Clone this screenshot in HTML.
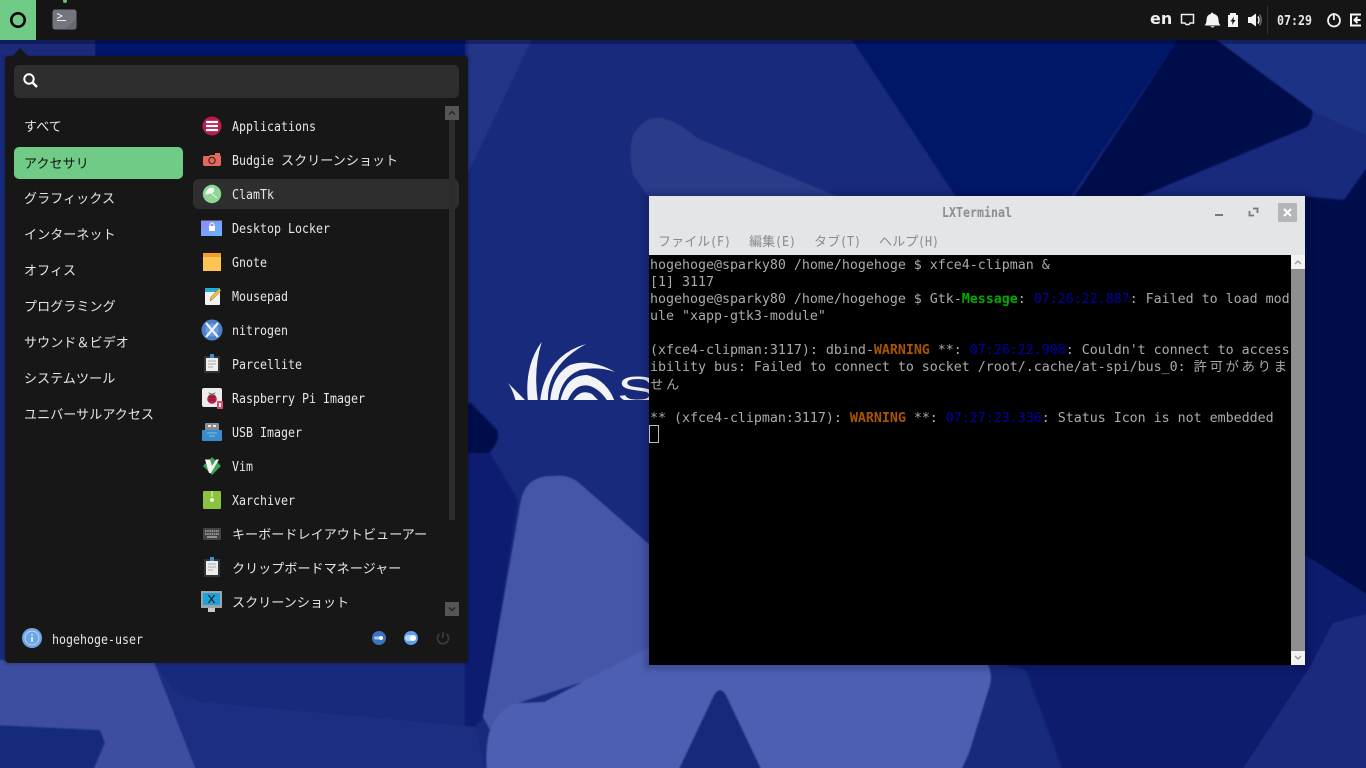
<!DOCTYPE html>
<html><head><meta charset="utf-8"><style>
html,body{margin:0;padding:0;width:1366px;height:768px;overflow:hidden;background:#182a7c}
*{box-sizing:border-box}
.abs{position:absolute}
.l{position:absolute;white-space:pre;line-height:20px;height:20px;font-family:"DejaVu Sans Mono","Liberation Mono",monospace;font-size:13px;color:#e6e6e6;transform:scaleX(.894);transform-origin:0 50%}
.j{position:absolute;white-space:pre;line-height:20px;height:20px;font-family:"Liberation Sans","Noto Sans CJK JP",sans-serif;font-size:13px;letter-spacing:.1px;color:#e6e6e6}
.tl{position:absolute;left:650px;white-space:pre;height:17px;line-height:17px;font-family:"DejaVu Sans Mono",monospace;font-size:13.33px;letter-spacing:-.03px;color:#aaa}
.tl b.g{color:#00aa00}.tl b.o{color:#aa5500}.tl i{font-style:normal;color:#0000aa}
.tl .cj{font-family:"Noto Sans CJK JP",sans-serif;letter-spacing:2.67px}
</style></head><body>
<svg class="abs" style="left:0;top:0" width="1366" height="768" viewBox="0 0 1366 768">
<defs><filter id="b" x="-5%" y="-5%" width="110%" height="110%"><feGaussianBlur stdDeviation="0.9"/></filter>
<filter id="b2" x="-5%" y="-5%" width="110%" height="110%"><feGaussianBlur stdDeviation="3"/></filter>
<linearGradient id="lk" x1="0" y1="0" x2="1" y2="1"><stop offset="0" stop-color="#8f86ff"/><stop offset="1" stop-color="#66b8ff"/></linearGradient>
<clipPath id="lc"><rect x="480" y="320" width="170" height="80"/></clipPath></defs>
<rect width="1366" height="768" fill="#182a7c"/>
<g filter="url(#b)">
<polygon points="-5,35 36,35 95,35 95,60 36,60 -5,60" fill="#1b2c7a"/>
<polygon points="95,35 465,35 465,60 95,60" fill="#06186a"/>
<polygon points="468,35 534,35 468,173" fill="#243587"/>
<polygon points="849,35 1181,35 1069,200 958,200" fill="#021266"/>
<path d="M1181,35 H1210 L1310,103 Q1316,115 1307,127 L1132,200 H1072Z" fill="#000a4c"/>
<polygon points="1210,35 1371,35 1371,137 1316,113" fill="#1f3084"/>
<polygon points="1344,200 1371,162 1371,600 1300,557 1300,196" fill="#000a4c"/>
<path d="M633,175 Q628,150 633,135 Q645,115 663,118 Q680,123 697,138 L846,200 H651Z" fill="#2a3a8a"/>
<path d="M465,403 H471 L497,430 Q501,440 489,453 H465Z" fill="#000a4c"/>
<polygon points="465,453 490,453 518,500 485,717 465,735" fill="#0c1e70"/>
<polygon points="153,660 173,690 200,702 475,727 486,773 197,773" fill="#1e2f82"/>
<polygon points="-5,660 153,660 197,773 92,773 105,743 100,730 -5,725" fill="#3c4ea0"/>
<path d="M-5,725 L95,730 Q107,735 103,747 L92,773 H-5Z" fill="#172a7c"/>
<path d="M521,500 Q526,476 552,476 Q568,474 578,482 L650,545 V660 L518,703 L490,730 L483,717Z" fill="#4457a8"/>
<path d="M648,648 L800,640 L975,650 Q995,665 990,685 L969,753 L960,773 H487 Q485,750 489,733 Q498,708 518,703 L544,702Z" fill="#4e5fb2"/>
<path d="M677,773 L713,697 Q720,683 727,697 L763,773Z" fill="#182a7c"/>
<polygon points="985,660 1305,555 1371,597 1371,613 1333,623 1310,667 1240,773 1064,773 1026,670" fill="#081b6c"/>
<polygon points="1333,623 1371,613 1371,773 1240,773 1310,667" fill="#1a2b7e"/>
</g>
<g clip-path="url(#lc)" fill="#f2f3f7">
<path d="M541.700,342 Q524,366 528,402 L538,402 Q533,370 541.700,342Z"/>
<path d="M508,383 L527,402 L516,402 Q513,390 508,383Z"/>
<path d="M586,344 Q545,356 540,402 L548,402 Q546,366 586,344Z"/>
<path d="M615,372 Q590,358 570,365 Q552,375 550,402 L558,402 Q560,378 580,370 Q598,366 615,372Z"/>
<path d="M615,402 Q607,380 587,375 Q566,375 560,402 L567,402 Q575,382 590,386 Q601,390 608,402Z"/>
<path d="M572,402 Q580,388 592,394 L600,402Z"/>
<text transform="translate(617,402) scale(1.7,1)" font-family="Liberation Sans" font-size="36" fill="#f2f3f7">S</text>
</g>
<rect x="644" y="192" width="666" height="478" fill="#000020" opacity=".18" filter="url(#b2)"/>
<rect x="0" y="40" width="1366" height="4" fill="#000030" opacity=".35"/>
<rect x="3" y="55" width="467" height="610" fill="#000" opacity=".12" filter="url(#b)"/>
</svg>

<!-- top panel -->
<div class="abs" style="left:0;top:0;width:1366px;height:40px;background:#151515"></div>
<div class="abs" style="left:0;top:0;width:36px;height:40px;background:#6fcb85"></div>
<svg class="abs" style="left:0;top:0" width="90" height="40">
<circle cx="18" cy="20" r="6.700" fill="none" stroke="#050505" stroke-width="2.600"/>
<circle cx="65" cy="1" r="2" fill="#5ec46e"/>
<rect x="52.500" y="9.500" width="24" height="20" rx="2.500" fill="#73767d"/>
<path d="M66,29 L76,19 V27 Q76,29 74,29Z" fill="#666970"/>
<path d="M57,13.500 L62,16 L57,18.500 M57,20.500 H66" fill="none" stroke="#eee" stroke-width="1"/>
</svg>
<div class="abs" style="left:1150px;top:9px;line-height:22px;font:bold 16px 'DejaVu Sans',sans-serif;color:#eee">en</div>
<svg class="abs" style="left:1175px;top:0" width="191" height="40">
<path d="M6.500,14.500 H18.500 V23 H15 L14,24.500 H11 L10,23 H6.500Z" fill="none" stroke="#eee" stroke-width="1.500"/>
<path d="M37,12.500 Q38,12.500 38.500,13.800 Q43.500,15 43.500,20 Q43.500,23.500 45.500,25.500 H29.500 Q31.500,23.500 31.500,20 Q31.500,15 36,13.800 Q36,12.500 37,12.500Z M35,26.200 H40 L37.500,27.800Z" fill="#f4f4f4"/>
<path d="M55,13 H61 V15 H63 V27 H53 V15 H55Z" fill="#f4f4f4"/>
<path d="M59,16.500 L55.500,21.500 H57.500 L57,25 L60.500,20 H58.500Z" fill="#151515"/>
<path d="M73,17 H76 L81,13.500 V26.500 L76,23 H73Z" fill="#f4f4f4"/>
<path d="M83,16.500 Q85,20 83,23.500" fill="none" stroke="#eee" stroke-width="1.500"/>
<path d="M84.500,14.500 Q88,20 84.500,25.500" fill="none" stroke="#666" stroke-width="1.500"/>
<rect x="92" y="6" width="1" height="28" fill="#333"/>
<path d="M155,14 Q150,16 150,20.500 A6,6 0 0 0 162,20.500 Q162,16 157,14" transform="translate(3,0)" fill="none" stroke="#f0f0f0" stroke-width="1.800"/>
<rect x="158" y="13" width="1.800" height="7" fill="#f0f0f0"/>
<path d="M186,14.500 H176 V25.500 H186" fill="none" stroke="#f4f4f4" stroke-width="2"/>
<path d="M185.500,20 H180 M182.500,17 L179.500,20 L182.500,23" fill="none" stroke="#f4f4f4" stroke-width="2"/>
</svg>
<div class="l" style="left:1277px;top:12px;font-weight:bold;color:#e8e8e8">07:29</div>

<!-- menu -->
<svg class="abs" style="left:5px;top:48px" width="30" height="10"><polygon points="7,9 15,0 24,9" fill="#171717"/></svg>
<div class="abs" style="left:5px;top:56px;width:463px;height:607px;background:#171717;border-radius:4px"></div>
<div class="abs" style="left:14px;top:65px;width:445px;height:33px;background:#2e2e2e;border-radius:5px"></div>
<svg class="abs" style="left:22px;top:72px" width="18" height="18"><circle cx="7" cy="7" r="4.700" fill="none" stroke="#fff" stroke-width="2"/><path d="M10.500,10.500 L15,15" stroke="#fff" stroke-width="2.400"/></svg>
<div class="abs" style="left:14px;top:147px;width:169px;height:32px;background:#6fcb85;border-radius:5px"></div>
<div class="abs" style="left:193px;top:179px;width:266px;height:30px;background:#2e2e2e;border-radius:6px"></div>

<div class="j" style="left:24px;top:117px">すべて</div>
<div class="j" style="left:24px;top:154px;color:#111">アクセサリ</div>
<div class="j" style="left:24px;top:189px">グラフィックス</div>
<div class="j" style="left:24px;top:225px">インターネット</div>
<div class="j" style="left:24px;top:261px">オフィス</div>
<div class="j" style="left:24px;top:297px">プログラミング</div>
<div class="j" style="left:24px;top:333px">サウンド＆ビデオ</div>
<div class="j" style="left:24px;top:369px">システムツール</div>
<div class="j" style="left:24px;top:405px">ユニバーサルアクセス</div>

<div class="l" style="left:232px;top:118px">Applications</div>
<div class="l" style="left:232px;top:152px">Budgie</div><div class="j" style="left:281px;top:151px">スクリーンショット</div>
<div class="l" style="left:232px;top:186px">ClamTk</div>
<div class="l" style="left:232px;top:220px">Desktop Locker</div>
<div class="l" style="left:232px;top:254px">Gnote</div>
<div class="l" style="left:232px;top:288px">Mousepad</div>
<div class="l" style="left:232px;top:322px">nitrogen</div>
<div class="l" style="left:232px;top:356px">Parcellite</div>
<div class="l" style="left:232px;top:390px">Raspberry Pi Imager</div>
<div class="l" style="left:232px;top:424px">USB Imager</div>
<div class="l" style="left:232px;top:458px">Vim</div>
<div class="l" style="left:232px;top:492px">Xarchiver</div>
<div class="j" style="left:232px;top:525px">キーボードレイアウトビューアー</div>
<div class="j" style="left:232px;top:559px">クリップボードマネージャー</div>
<div class="j" style="left:232px;top:593px">スクリーンショット</div>
<div class="l" style="left:52px;top:631px">hogehoge-user</div>

<svg class="abs" style="left:0;top:100px" width="470" height="563" viewBox="0 100 470 563">
<!-- scrollbar -->
<rect x="449" y="120" width="6" height="400" fill="#2c2c2c"/>
<rect x="445" y="106" width="14" height="14" fill="#555"/><path d="M449,114.500 L452,111.500 L455,114.500" fill="none" stroke="#2a2a2a" stroke-width="1.500"/>
<rect x="445" y="602" width="14" height="14" fill="#555"/><path d="M449,607.500 L452,610.500 L455,607.500" fill="none" stroke="#222" stroke-width="1.500"/>
<!-- applications -->
<circle cx="212" cy="126" r="9.500" fill="#b81d4b"/><path d="M206,122 H218 M206,126 H218 M206,130 H218" stroke="#fff" stroke-width="2.200"/>
<!-- camera -->
<path d="M204,156 H209 L210,155 H219 Q221,155 221,157 V164 Q221,166 219,166 H205 Q203,166 203,164 V158 Q203,156 204,156Z" fill="#e2695e"/>
<rect x="215" y="153" width="5" height="3" fill="#e2695e"/>
<circle cx="212" cy="160.500" r="3.200" fill="#e2695e" stroke="#4a2020" stroke-width="1.200"/>
<!-- clamtk -->
<circle cx="212" cy="194" r="9.200" fill="#8ed694"/>
<path d="M206,194 Q207,188 213,188 Q215,192 211,193Z M211,193 L217,198" fill="#f4f4f4" stroke="#f4f4f4" stroke-width="1"/>
<!-- desktop locker -->
<rect x="201" y="220" width="21" height="16" fill="url(#lk)"/><rect x="201" y="220" width="21" height="1" fill="#556"/>
<rect x="209" y="226" width="6" height="5" fill="#fff"/><path d="M210,226 V225 A2,2 0 0 1 214,225 V226" fill="none" stroke="#fff"/>
<!-- gnote -->
<rect x="203" y="253" width="18" height="18" fill="#ffc451"/><rect x="203" y="253" width="18" height="4" fill="#f39d2a"/>
<!-- mousepad -->
<rect x="205" y="288" width="15" height="17" rx="1" fill="#f2f2f2"/><rect x="205" y="288" width="15" height="4" fill="#26a8d8"/>
<path d="M210,301 L211,297 L219,288.500 L221,290.500 L213,299Z" fill="#f5c330" stroke="#444" stroke-width=".4"/>
<!-- nitrogen -->
<circle cx="212" cy="330" r="10.500" fill="#4c80c8"/><circle cx="212" cy="330" r="6.500" fill="#6c9bd8"/>
<path d="M206,323 L218,337 M218,323 L206,337" stroke="#eef" stroke-width="2.200"/>
<!-- parcellite -->
<rect x="204" y="356" width="16" height="17" rx="1" fill="#333"/><rect x="206" y="358" width="12" height="13" fill="#eee"/><rect x="210" y="354" width="4" height="4" fill="#3a8fd0"/>
<path d="M208,361 H216 M208,364 H216 M208,367 H213" stroke="#aaa"/>
<!-- raspberry -->
<rect x="202" y="388" width="20" height="19" rx="2" fill="#ececec"/>
<circle cx="212" cy="399" r="4.800" fill="#b81f4b"/><path d="M208,392 Q212,395 216,392 L214,395 H210Z" fill="#4a9a45"/>
<path d="M209,397 H215 M209,400 H215" stroke="#7e1436"/>
<rect x="217" y="401" width="6" height="8" rx="1" fill="#e0486a"/><rect x="219" y="403" width="2" height="4" fill="#fff"/>
<!-- usb -->
<rect x="205" y="423" width="14" height="8" rx="1" fill="#8a8a8a"/><rect x="208" y="425" width="3" height="2" fill="#eee"/><rect x="213" y="425" width="3" height="2" fill="#eee"/>
<rect x="202" y="430" width="20" height="11" rx="1" fill="#3a8ccc"/><path d="M207,433 H217 M209,436 H215" stroke="#bfe0f5" stroke-opacity=".6"/>
<!-- vim -->
<polygon points="212,457 221,466 212,475 203,466" fill="#3aa655"/>
<path d="M205,459.500 H210 L212,466 L216,459.500 H219 L211,473 H209Z" fill="#f4f4f4"/>
<!-- xarchiver -->
<rect x="203" y="491" width="18" height="18" rx="1" fill="#8bc240"/><rect x="211" y="491" width="2" height="6" fill="#c0e080"/><circle cx="212" cy="500" r="2" fill="#e8f4d0"/>
<!-- keyboard -->
<rect x="203" y="528" width="18" height="12" rx="1" fill="#444"/><path d="M205,531 H219 M205,534 H219" stroke="#ddd" stroke-dasharray="1.500 .7"/><path d="M207,537 H217" stroke="#ddd"/>
<!-- clipboard -->
<rect x="204" y="559" width="16" height="18" rx="1" fill="#333"/><rect x="206" y="561" width="12" height="14" fill="#eee"/><rect x="210" y="557" width="4" height="4" fill="#3a8fd0"/>
<path d="M208,564 H216 M208,567 H216 M208,570 H213" stroke="#aaa"/>
<!-- screenshot -->
<rect x="201" y="591" width="21" height="17" fill="#9ea4a8"/><rect x="203" y="593" width="17" height="12" fill="#1ca3dc"/>
<path d="M208.500,595 L214.500,603 M214.500,595 L208.500,603" stroke="#222" stroke-width="1.200"/>
<rect x="208" y="608" width="7" height="4" fill="#c8c8c8"/>
<!-- footer -->
<circle cx="32" cy="638" r="10" fill="#6fa6e6"/><circle cx="32" cy="638" r="7" fill="none" stroke="#bcd6f5"/><path d="M32,634 V635.500 M32,637 V642" stroke="#e8f1fc" stroke-width="1.600"/>
<circle cx="379" cy="638" r="7" fill="#3a74c0"/><rect x="374" y="636.500" width="9" height="3" rx="1.500" fill="#a8c8ee"/><circle cx="381" cy="638" r="2" fill="#fff"/>
<circle cx="411" cy="638" r="7" fill="#5a9ff0"/><rect x="405" y="635" width="11" height="6" rx="3" fill="#b6d4f8"/><circle cx="413" cy="638" r="3" fill="#fff"/>
<path d="M439.500,634 A5.500,5.500 0 1 0 446.500,634 M443,632 V638" fill="none" stroke="#3a3a3a" stroke-width="1.800"/>
</svg>

<!-- terminal -->
<div class="abs" style="left:649px;top:196px;width:656px;height:59px;background:#e3e5e7"></div>
<div class="l" style="left:942px;top:204px;font-weight:bold;color:#8b8e90">LXTerminal</div>
<svg class="abs" style="left:1205px;top:200px" width="100" height="26">
<rect x="10" y="14" width="8" height="2" fill="#777"/>
<path d="M48,8.500 H52.500 V13 M49,15.500 H44.500 V11" fill="none" stroke="#777" stroke-width="1.800"/>
<rect x="73" y="3" width="19" height="19" rx="1" fill="#b4b7ba"/><path d="M79,9 L86,16 M86,9 L79,16" stroke="#fff" stroke-width="2"/>
</svg>
<div class="j" style="left:658px;top:232px;color:#8a8a8a">ファイル</div><div class="l" style="left:710px;top:233px;color:#8a8a8a">(F)</div>
<div class="j" style="left:749px;top:232px;color:#8a8a8a">編集</div><div class="l" style="left:775px;top:233px;color:#8a8a8a">(E)</div>
<div class="j" style="left:814px;top:232px;color:#8a8a8a">タブ</div><div class="l" style="left:840px;top:233px;color:#8a8a8a">(T)</div>
<div class="j" style="left:879px;top:232px;color:#8a8a8a">ヘルプ</div><div class="l" style="left:918px;top:233px;color:#8a8a8a">(H)</div>

<div class="abs" style="left:649px;top:255px;width:642px;height:410px;background:#000;overflow:hidden"></div>
<div class="abs" style="left:1291px;top:255px;width:14px;height:410px;background:#8f8f8f"></div>
<div class="abs" style="left:1291px;top:255px;width:14px;height:14px;background:#f2f2f2"></div>
<div class="abs" style="left:1291px;top:651px;width:14px;height:14px;background:#f2f2f2"></div>
<svg class="abs" style="left:1291px;top:255px" width="14" height="410"><path d="M4,9 L7,6 L10,9" fill="none" stroke="#999" stroke-width="1.300"/><path d="M4,401 L7,404 L10,401" fill="none" stroke="#999" stroke-width="1.300"/></svg>

<div class="tl" style="top:257px">hogehoge@sparky80 /home/hogehoge $ xfce4-clipman &amp;</div>
<div class="tl" style="top:274px">[1] 3117</div>
<div class="tl" style="top:291px">hogehoge@sparky80 /home/hogehoge $ Gtk-<b class="g">Message</b>: <i>07:26:22.887</i>: Failed to load mod</div>
<div class="tl" style="top:308px">ule "xapp-gtk3-module"</div>
<div class="tl" style="top:342px">(xfce4-clipman:3117): dbind-<b class="o">WARNING</b> **: <i>07:26:22.908</i>: Couldn't connect to access</div>
<div class="tl" style="top:357px">ibility bus: Failed to connect to socket /root/.cache/at-spi/bus_0: <span class="cj">許可がありま</span></div>
<div class="tl" style="top:375px"><span class="cj">せん</span></div>
<div class="tl" style="top:410px">** (xfce4-clipman:3117): <b class="o">WARNING</b> **: <i>07:27:23.336</i>: Status Icon is not embedded</div>
<div class="abs" style="left:649px;top:425px;width:10px;height:18px;border:1px solid #bbb"></div>
</body></html>
